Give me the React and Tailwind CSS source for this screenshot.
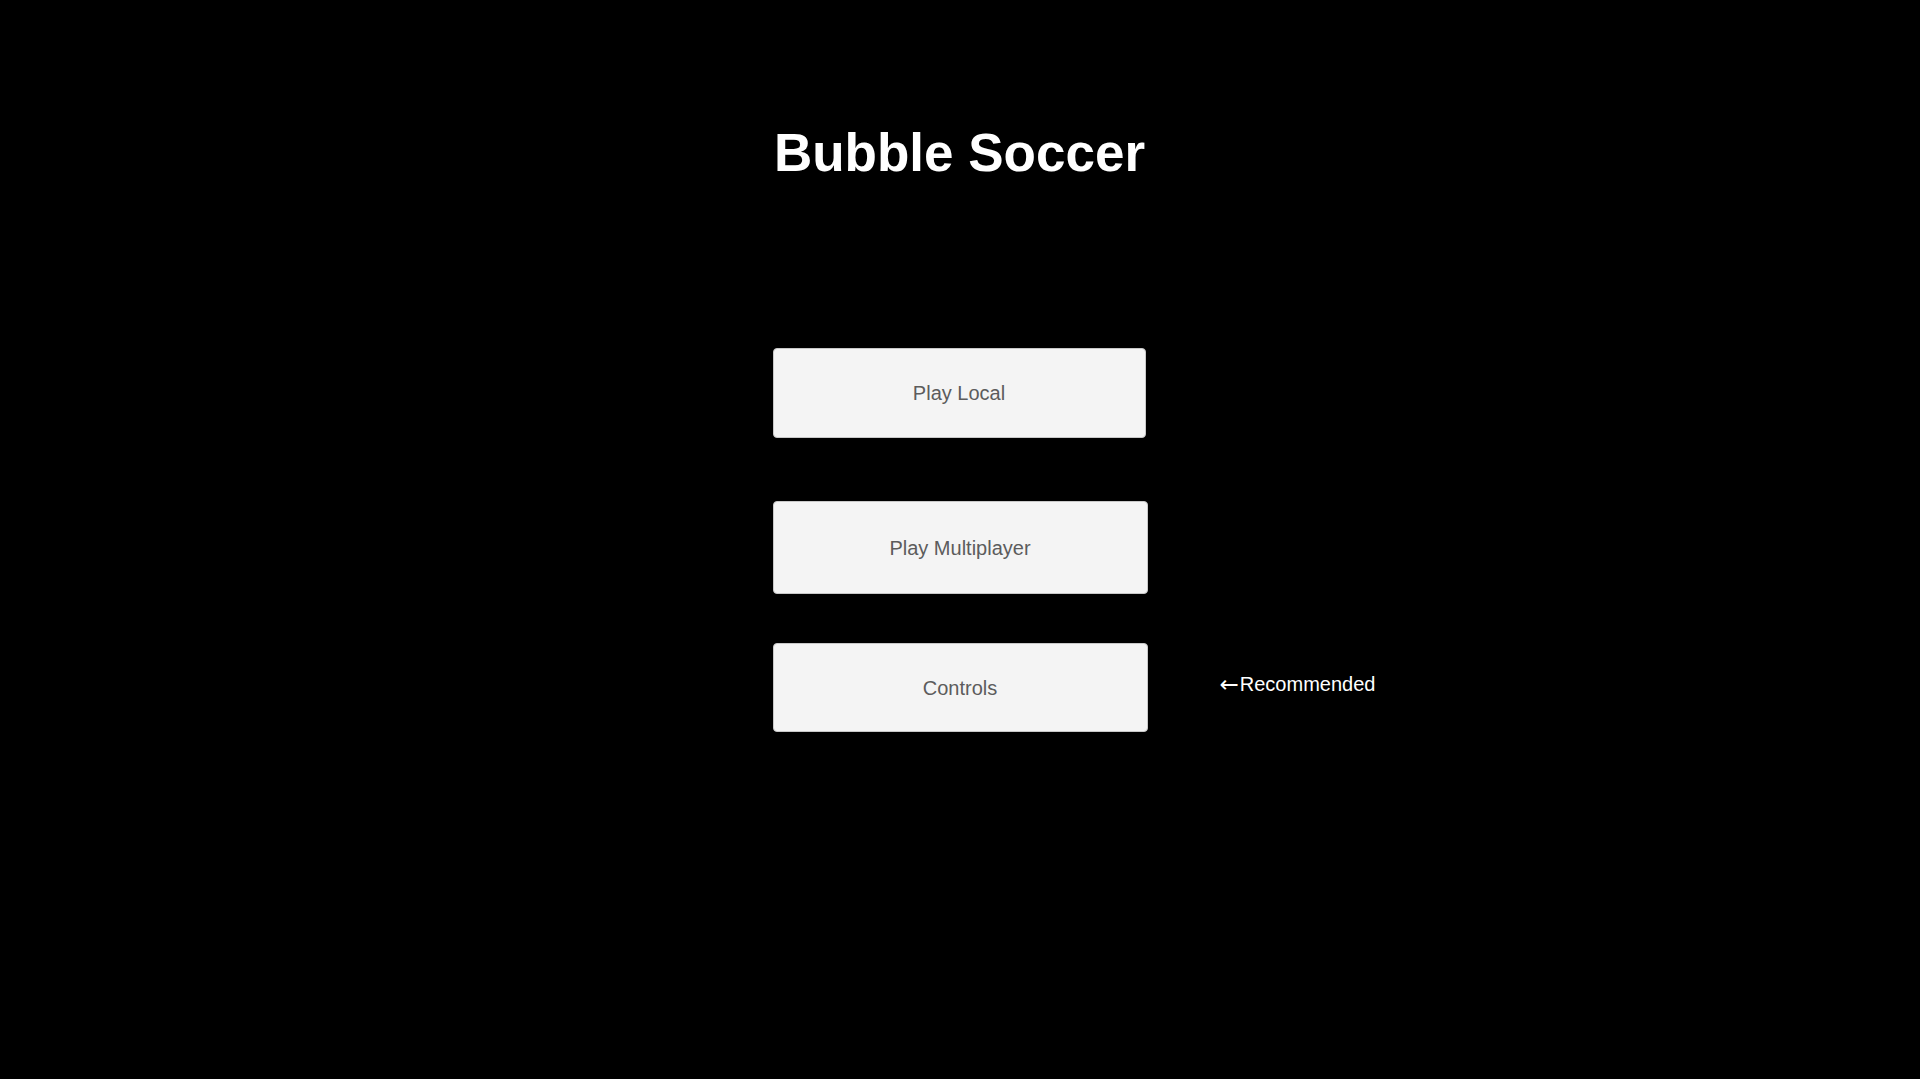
import React from 'react';

const MenuButton = ({ label, className = "" }) => (
  <button
    className={`bg-[#f4f4f4] border border-[#c8c8c8] rounded-[4px] text-[20px] text-[#5c5c5c] flex items-center justify-center ${className}`}
    style={{ fontFamily: '"Liberation Sans", Arial, sans-serif' }}
  >
    {label}
  </button>
);

export default function App() {
  return (
    <div
      className="w-full min-h-[1079px] bg-black flex flex-col items-center pt-[126px]"
      style={{ fontFamily: '"Liberation Sans", Arial, sans-serif' }}
    >
      <h1 className="text-white font-bold text-[53px] leading-none h-[53px] ml-[-1px]">Bubble Soccer</h1>

      <div className="mt-[169px] grid grid-cols-[1fr_auto_1fr] w-full">
        <div></div>
        <div className="flex flex-col">
          <MenuButton label="Play Local" className="w-[373px] h-[90px]" />
          <MenuButton label="Play Multiplayer" className="w-[375px] h-[93px] mt-[63px]" />
          <MenuButton label="Controls" className="w-[375px] h-[89px] mt-[49px]" />
        </div>
        <div className="flex flex-col justify-end">
          <div className="h-[89px] mb-[4px] flex items-center pl-[72px] text-white text-[20px] leading-none">
            <span className="font-['DejaVu_Sans'] text-[23px] mr-[1px] mt-[1px]">←</span>Recommended
          </div>
        </div>
      </div>
    </div>
  );
}
